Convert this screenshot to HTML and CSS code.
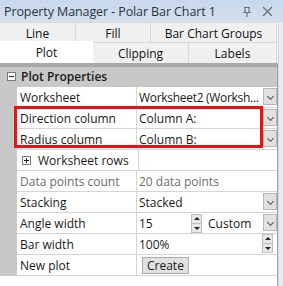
FILE: index.html
```html
<!DOCTYPE html>
<html>
<head>
<meta charset="utf-8">
<link rel="stylesheet" href="styles.css">
</head>
<body>
<div class="win">
  <div class="title">
    <span class="title-text">Property Manager - Polar Bar Chart 1</span>
    <span class="title-icons">
      <svg width="10" height="12" viewBox="0 0 10 12"><path d="M2 1.5h6M3 1.5v5M7 1.5v5M1 6.5h8M5 6.5v4.5" stroke="#6b7480" stroke-width="1.2" fill="none"/></svg>
      <svg width="11" height="11" viewBox="0 0 11 11"><path d="M1 1l9 9M10 1l-9 9" stroke="#6b7480" stroke-width="1.4" fill="none"/></svg>
    </span>
  </div>
  <div class="main">
    <div class="tabs">
      <div class="tabrow">
        <div class="tab w76">Line</div>
        <div class="tab w75">Fill</div>
        <div class="tab w125">Bar Chart Groups</div>
      </div>
      <div class="tabrow">
        <div class="tab sel w93">Plot</div>
        <div class="tab w96">Clipping</div>
        <div class="tab w87">Labels</div>
      </div>
    </div>
    <div class="grid">
      <div class="cat">
        <svg class="box" width="9" height="9" viewBox="0 0 9 9"><rect x="0.5" y="0.5" width="8" height="8" fill="#fff" stroke="#7a7a7a"/><path d="M2 4.5h5" stroke="#222"/></svg>
        <span class="cat-name">Plot Properties</span>
      </div>
      <div class="rows">
        <div class="row"><div class="lab">Worksheet</div><div class="val"><span class="vt tight">Worksheet2 (Worksh...</span><span class="dd"></span></div></div>
        <div class="row"><div class="lab">Direction column</div><div class="val"><span class="vt">Column A:</span><span class="dd"></span></div></div>
        <div class="row"><div class="lab">Radius column</div><div class="val"><span class="vt">Column B:</span><span class="dd"></span></div></div>
        <div class="row"><div class="lab sub"><svg class="box small" width="9" height="9" viewBox="0 0 9 9"><rect x="0.5" y="0.5" width="8" height="8" fill="#fff" stroke="#7a7a7a"/><path d="M2 4.5h5M4.5 2v5" stroke="#222"/></svg>Worksheet rows</div><div class="val"></div></div>
        <div class="row"><div class="lab dim">Data points count</div><div class="val dim"><span class="vt">20 data points</span></div></div>
        <div class="row"><div class="lab">Stacking</div><div class="val"><span class="vt">Stacked</span><span class="dd"></span></div></div>
        <div class="row"><div class="lab">Angle width</div><div class="val"><span class="vt num">15</span><span class="spin"><i class="up"></i><i class="dn"></i></span><span class="vt cust">Custom</span><span class="dd"></span></div></div>
        <div class="row"><div class="lab">Bar width</div><div class="val"><span class="vt">100%</span><span class="spin r"><i class="up"></i><i class="dn"></i></span></div></div>
        <div class="row"><div class="lab">New plot</div><div class="val"><span class="btn">Create</span></div></div>
      </div>
      <div class="hl"></div>
    </div>
  </div>
</div>
</body>
</html>
```
FILE: styles.css
```css
html, body { margin: 0; padding: 0; }
body {
  width: 283px; height: 286px; overflow: hidden;
  background: #e3ebf5;
  font-family: "Open Sans", "Noto Sans", sans-serif;
  font-size: 12px;
  color: #1a1a1a;
}
.win { width: 283px; height: 286px; display: flex; flex-direction: column; }
.title {
  height: 22px;
  background: linear-gradient(#c9d8ec, #d3dfee);
  display: flex; align-items: center; justify-content: space-between;
  padding: 0 10px 0 4px;
  color: #2b3440;
  box-sizing: border-box;
}
.title-text { font-size: 12.5px; letter-spacing: -0.1px; }
.title-icons { display: flex; gap: 10px; align-items: center; margin-top: 1px; }
.main { width: 278px; flex: 1; background: #fff; display: flex; flex-direction: column; border-right: 1px solid #d9d9d9; }
.tabs { background: #f0f0f0; }
.tabrow { display: flex; }
.tabrow:first-child { height: 20px; }
.tabrow:last-child { height: 21px; }
.tab {
  box-sizing: border-box;
  background: #f0f0f0;
  border: 1px solid #d9d9d9; border-left: none; border-bottom: none;
  display: flex; align-items: center; justify-content: center;
  color: #111;
  padding-top: 1px;
}
.tabrow:first-child .tab { border-top: 1px solid #d9d9d9; }
.tab.sel { background: #fff; border: none; padding-top: 0; height: 22px; margin-top: -1px; }
.w76 { width: 76px; } .w75 { width: 75px; } .w125 { width: 126px; }
.w93 { width: 93px; } .w96 { width: 96px; } .w87 { width: 88px; }
.grid {
  position: relative;
  flex: 1;
  border-top: 4px solid #a8a8a8;
  border-right: 1px solid #a0a0a0;
  background: #fff;
}
.cat {
  height: 19px; background: #c8c8c8;
  display: flex; align-items: center;
  border-bottom: 1px solid #c8c8c8;
}
.box { display: block; margin-left: 7px; margin-right: 5px; flex: none; }
.cat-name { font-weight: 600; color: #1a1a1a; font-size: 12px; }
.rows { border-left: 17px solid #c8c8c8; }
.row { height: 20px; display: flex; border-bottom: 1px solid #d5d5d5; }
.lab { width: 116px; padding-left: 3px; border-right: 1px solid #d5d5d5; display: flex; align-items: center; white-space: nowrap; }
.lab.sub { padding-left: 5px; }
.box.small { margin-left: 0; margin-right: 7px; }
.val { flex: 1; display: flex; align-items: center; padding-left: 2px; position: relative; white-space: nowrap; }
.tight { letter-spacing: -0.3px; }
.dim { color: #6d6d6d; }
.num { width: 52px; }
.cust { margin-left: 6px; }
.dd {
  position: absolute; right: 0; top: 1px;
  width: 14px; height: 17px; box-sizing: border-box;
  background: #e1e1e1; border: 1px solid #b8b8b8;
}
.dd::after {
  content: ""; position: absolute; left: 4px; top: 5px;
  width: 4px; height: 4px; border-right: 1px solid #555; border-bottom: 1px solid #555;
  transform: rotate(45deg);
}
.spin { display: flex; flex-direction: column; width: 11px; height: 19px; box-sizing: border-box; border: 1px solid #c0c0c0; background: #e8e8e8; }
.spin.r { position: absolute; right: 4px; top: 0; }
.spin i { flex: 1; position: relative; display: block; }
.spin i.up { border-bottom: 1px solid #c0c0c0; }
.spin i.up::after { content: ""; position: absolute; left: 2px; top: 2px; border-left: 3px solid transparent; border-right: 3px solid transparent; border-bottom: 3px solid #222; }
.spin i.dn::after { content: ""; position: absolute; left: 2px; top: 3px; border-left: 3px solid transparent; border-right: 3px solid transparent; border-top: 3px solid #222; }
.btn {
  margin-left: 3px; height: 17px; padding: 0 4px; box-sizing: border-box;
  background: #e1e1e1; border: 1px solid #adadad;
  display: flex; align-items: center;
}
.hl {
  position: absolute; left: 14px; top: 39px; width: 249px; height: 42px;
  box-sizing: border-box; border: 3px solid #ee1111;
}
```
